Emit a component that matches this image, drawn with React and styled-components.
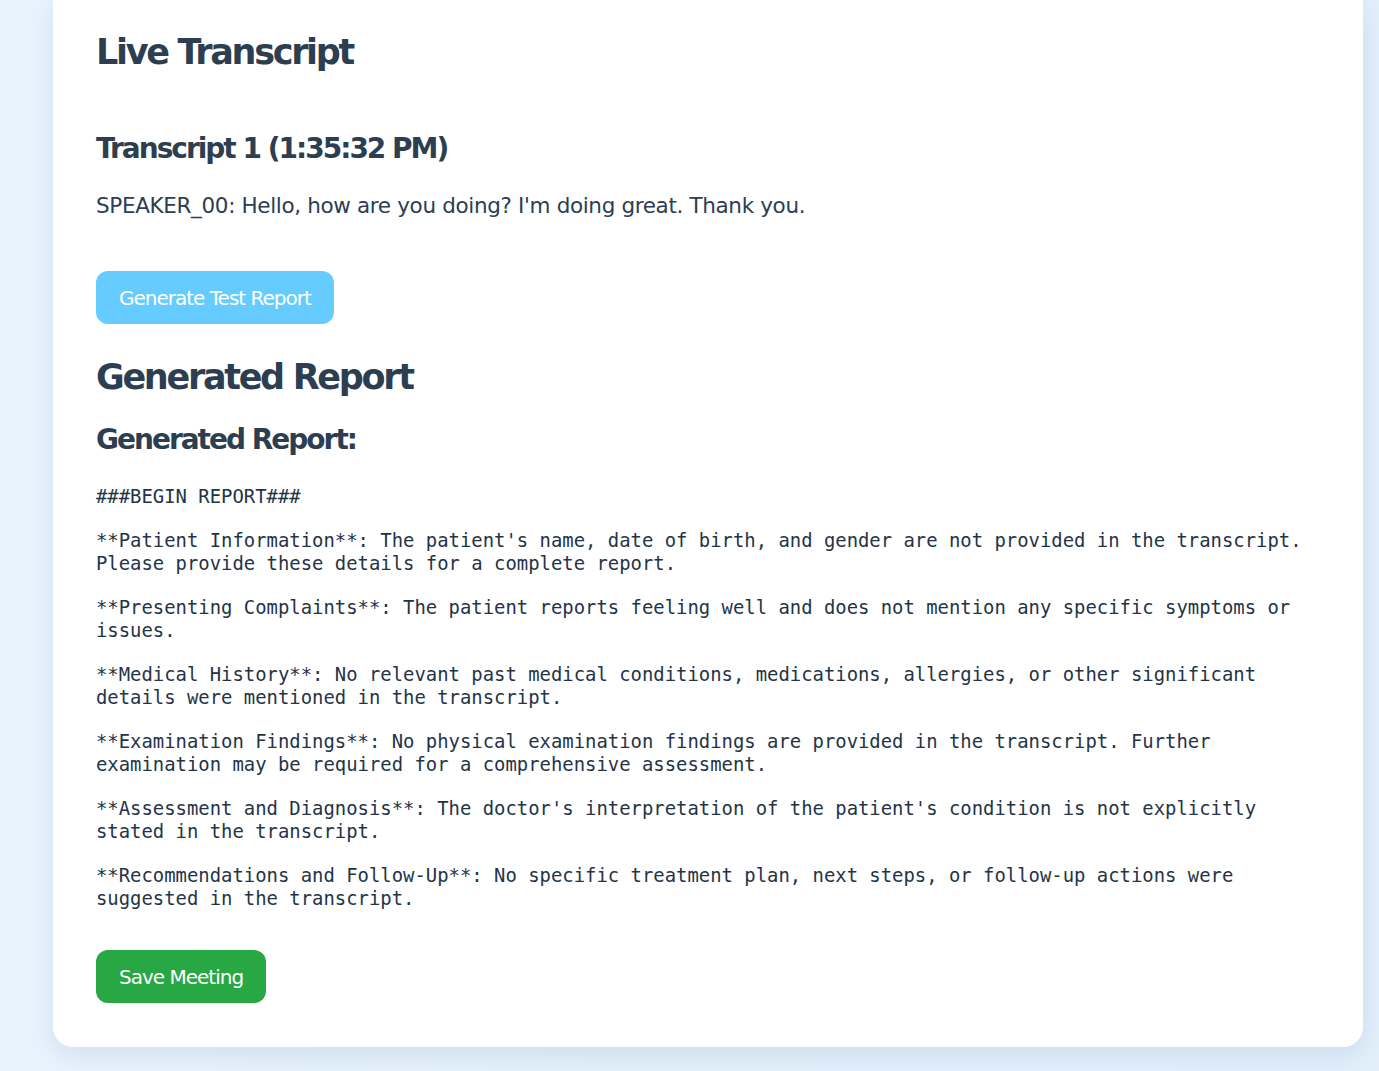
import React from 'react';
import styled, { createGlobalStyle } from 'styled-components';

const GlobalStyle = createGlobalStyle`
  html, body {
    margin: 0;
    padding: 0;
  }
  body {
    background: linear-gradient(90deg, #e8f3fd 0%, #e3f0fb 50%, #e2effb 100%);
    font-family: "DejaVu Sans", Verdana, sans-serif;
    color: #2c3e50;
  }
`

const Page = styled.div`
  min-height: 1071px;
  padding: 0 16px 24px 53px;
  box-sizing: border-box;
`

const Card = styled.div`
  width: 1310px;
  box-sizing: border-box;
  background: #fff;
  border-radius: 0 0 20px 20px;
  box-shadow: 0 8px 24px rgba(120, 150, 180, 0.2);
  padding: 31px 43px 44px 43px;
`

// big = section heading, small = sub heading
const Title = styled.h1`
  margin: 0;
  margin-top: ${(props) => props.top || '0'};
  font-weight: bold;
  color: #2c3e50;
  font-size: ${(props) => (props.big ? '35px' : '28px')};
  line-height: ${(props) => (props.big ? '42px' : '34px')};
  letter-spacing: ${(props) => (props.big ? '-2.3px' : '-2px')};
`

const Speech = styled.p`
  margin: 26.5px 0 0;
  font-size: 21.5px;
  line-height: 26px;
  letter-spacing: -0.35px;
  color: #2c3e50;
`

const Button = styled.button`
  display: block;
  border: none;
  border-radius: 12px;
  height: 53px;
  padding: 0 23px;
  font-family: "DejaVu Sans", Verdana, sans-serif;
  font-size: 20px;
  letter-spacing: -1px;
  color: #fff;
  background: ${(props) => props.color};
  margin-top: ${(props) => props.top};
  cursor: pointer;
`

const Report = styled.pre`
  margin: 27.5px 0 0;
  font-family: "DejaVu Sans Mono", "Liberation Mono", monospace;
  font-size: 18.9px;
  line-height: 22.35px;
  white-space: pre-wrap;
  color: #243447;
`

const reportText = [
  '###BEGIN REPORT###',
  "**Patient Information**: The patient's name, date of birth, and gender are not provided in the transcript. Please provide these details for a complete report.",
  '**Presenting Complaints**: The patient reports feeling well and does not mention any specific symptoms or issues.',
  '**Medical History**: No relevant past medical conditions, medications, allergies, or other significant details were mentioned in the transcript.',
  '**Examination Findings**: No physical examination findings are provided in the transcript. Further examination may be required for a comprehensive assessment.',
  "**Assessment and Diagnosis**: The doctor's interpretation of the patient's condition is not explicitly stated in the transcript.",
  '**Recommendations and Follow-Up**: No specific treatment plan, next steps, or follow-up actions were suggested in the transcript.',
].join('\n\n')

export default function App() {
  return (
    <React.Fragment>
      <GlobalStyle />
      <Page>
        <Card>
          <Title big>Live Transcript</Title>
          <Title as="h3" top={'59px'}>Transcript 1 (1:35:32 PM)</Title>
          <Speech>SPEAKER_00: Hello, how are you doing? I'm doing great. Thank you.</Speech>
          <Button color={'#66ccff'} top={'52.5px'}>Generate Test Report</Button>
          <Title as="h2" big top={'32px'}>Generated Report</Title>
          <Title as="h3" top={'25px'}>Generated Report:</Title>
          <Report>{reportText}</Report>
          <Button color={'#28a745'} top={'41px'}>Save Meeting</Button>
        </Card>
      </Page>
    </React.Fragment>
  );
}
